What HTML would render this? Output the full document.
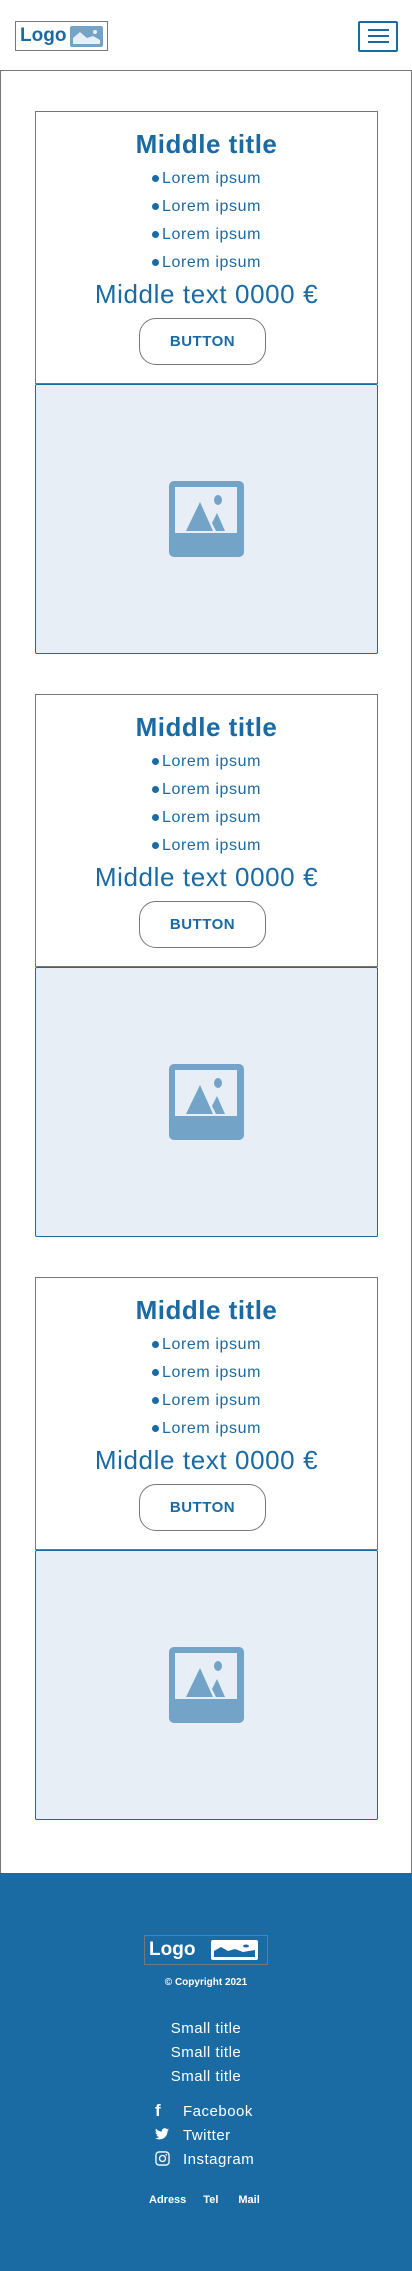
<!DOCTYPE html>
<html><head><meta charset="utf-8"><style>
*{margin:0;padding:0;box-sizing:border-box}
body{width:412px;height:2271px;background:#fff;font-family:"Liberation Sans",sans-serif;color:#1a6aa3;position:relative;overflow:hidden}
.abs{position:absolute}
.logo{left:15px;top:21px;width:93px;height:30px;border:1px solid #777}
.ham{left:358px;top:21px;width:40px;height:31px;border:2px solid #1a6aa3;border-radius:2px}
.ham i{position:absolute;left:8px;width:21px;height:2px;background:#1a6aa3}
.frame{left:0;top:70px;width:412px;height:1803px;border:1px solid #777;border-bottom:none}
.card{position:absolute;left:35px;width:343px;height:273px;border:1px solid #777;text-align:center}
.card h2{position:absolute;top:17px;width:100%;font-size:26px;font-weight:bold;letter-spacing:.5px}
.card ul{position:absolute;top:53px;width:100%;list-style:none;font-size:16px;letter-spacing:.6px}
.card li{height:28px;line-height:28px}
.card li:before{content:"";display:inline-block;width:7px;height:7px;border-radius:50%;background:#1a6aa3;margin-right:3px;vertical-align:1px}
.card .mt{position:absolute;top:167px;width:100%;font-size:26px;letter-spacing:.6px}
.btn{position:absolute;left:103px;top:206px;width:127px;height:47px;border:1px solid #777;border-radius:17px;font-weight:bold;font-size:15px;line-height:46px;letter-spacing:.5px}
.img{position:absolute;left:35px;width:343px;height:270px;background:#e7eef6;border:1.5px solid #1a6aa3;border-radius:2px}
.img svg{position:absolute;left:133px;top:96px}
.foot{left:0;top:1873px;width:412px;height:398px;background:#1a6aa3;color:#fff;text-align:center}
</style></head><body>
<div class="abs logo"><span style="position:absolute;left:4px;top:3px;font-size:19px;font-weight:bold">Logo</span>
<svg class="abs" style="left:54px;top:4px" width="33" height="21" viewBox="0 0 33 21"><rect width="33" height="21" rx="2" fill="#73a3c6"/><path d="M3 12 L10 6 L17 12 L23 10 L30 14 L30 18 L3 18Z" fill="#e7eef6"/><circle cx="25" cy="6" r="2" fill="#e7eef6"/></svg></div>
<div class="abs ham"><i style="top:6px"></i><i style="top:12px"></i><i style="top:18px"></i></div>
<div class="abs frame"></div>

<div class="card" style="top:111px"><h2>Middle title</h2><ul><li>Lorem ipsum</li><li>Lorem ipsum</li><li>Lorem ipsum</li><li>Lorem ipsum</li></ul><div class="mt">Middle text 0000 €</div><div class="btn">BUTTON</div></div>
<div class="img" style="top:384px"><svg width="75" height="76" viewBox="0 0 75 76"><rect width="75" height="76" rx="5" fill="#73a3c6"/><rect x="6" y="6" width="62" height="46" fill="#e7eef6"/><path d="M17 50 L31 21 L44 50Z" fill="#73a3c6"/><path d="M43 42 L48 32 L56 50 L47 50Z" fill="#73a3c6"/><ellipse cx="49" cy="19" rx="4" ry="5" fill="#73a3c6"/></svg></div>

<div class="card" style="top:694px"><h2>Middle title</h2><ul><li>Lorem ipsum</li><li>Lorem ipsum</li><li>Lorem ipsum</li><li>Lorem ipsum</li></ul><div class="mt">Middle text 0000 €</div><div class="btn">BUTTON</div></div>
<div class="img" style="top:967px"><svg width="75" height="76" viewBox="0 0 75 76"><rect width="75" height="76" rx="5" fill="#73a3c6"/><rect x="6" y="6" width="62" height="46" fill="#e7eef6"/><path d="M17 50 L31 21 L44 50Z" fill="#73a3c6"/><path d="M43 42 L48 32 L56 50 L47 50Z" fill="#73a3c6"/><ellipse cx="49" cy="19" rx="4" ry="5" fill="#73a3c6"/></svg></div>

<div class="card" style="top:1277px"><h2>Middle title</h2><ul><li>Lorem ipsum</li><li>Lorem ipsum</li><li>Lorem ipsum</li><li>Lorem ipsum</li></ul><div class="mt">Middle text 0000 €</div><div class="btn">BUTTON</div></div>
<div class="img" style="top:1550px"><svg width="75" height="76" viewBox="0 0 75 76"><rect width="75" height="76" rx="5" fill="#73a3c6"/><rect x="6" y="6" width="62" height="46" fill="#e7eef6"/><path d="M17 50 L31 21 L44 50Z" fill="#73a3c6"/><path d="M43 42 L48 32 L56 50 L47 50Z" fill="#73a3c6"/><ellipse cx="49" cy="19" rx="4" ry="5" fill="#73a3c6"/></svg></div>

<div class="abs foot">
<div class="abs" style="left:144px;top:62px;width:124px;height:30px;border:1px solid #777"><span style="position:absolute;left:4px;top:3px;font-size:19px;font-weight:bold">Logo</span>
<svg class="abs" style="left:66px;top:4px" width="47" height="20" viewBox="0 0 47 20"><rect width="47" height="20" rx="2" fill="#fff"/><path d="M3 11 L10 7 L17 11 L24 9 L32 12 L44 10 L44 17 L3 17Z" fill="#1a6aa3"/><ellipse cx="35" cy="6" rx="3" ry="1.5" fill="#1a6aa3"/></svg></div>
<div class="abs" style="top:104px;width:100%;font-size:10px;font-weight:bold">© Copyright 2021</div>
<div class="abs" style="top:144px;width:100%;font-size:15px;line-height:24px;letter-spacing:.5px">Small title<br>Small title<br>Small title</div>
<div class="abs" style="left:155px;top:226px;font-size:15px;line-height:24px;text-align:left;letter-spacing:.5px">
<div><span style="display:inline-block;width:28px;font-weight:bold;font-size:17px">f</span>Facebook</div>
<div><svg width="14" height="12" viewBox="0 0 24 20" style="margin-right:14px"><path d="M24 2.4a10 10 0 0 1-2.8.8 5 5 0 0 0 2.2-2.7 10 10 0 0 1-3.1 1.2A4.9 4.9 0 0 0 11.9 6 14 14 0 0 1 1.7.8a4.9 4.9 0 0 0 1.5 6.6A5 5 0 0 1 1 6.8a4.9 4.9 0 0 0 3.9 4.8 5 5 0 0 1-2.2.1 4.9 4.9 0 0 0 4.6 3.4A9.9 9.9 0 0 1 0 17.1 14 14 0 0 0 7.5 19.3c9 0 14-7.5 14-14v-.6A10 10 0 0 0 24 2.4z" fill="#fff"/></svg>Twitter</div>
<div><svg width="15" height="15" viewBox="0 0 16 16" style="margin-right:13px;vertical-align:-2px"><rect x="1" y="1" width="14" height="14" rx="3.5" fill="none" stroke="#fff" stroke-width="1.4"/><circle cx="8" cy="8" r="3.2" fill="none" stroke="#fff" stroke-width="1.4"/><circle cx="12" cy="4" r=".9" fill="#fff"/></svg>Instagram</div>
</div>
<div class="abs" style="top:321px;left:149px;font-size:11px;font-weight:bold;word-spacing:0"><span>Adress</span><span style="margin-left:17px">Tel</span><span style="margin-left:20px">Mail</span></div>
</div>
</body></html>
